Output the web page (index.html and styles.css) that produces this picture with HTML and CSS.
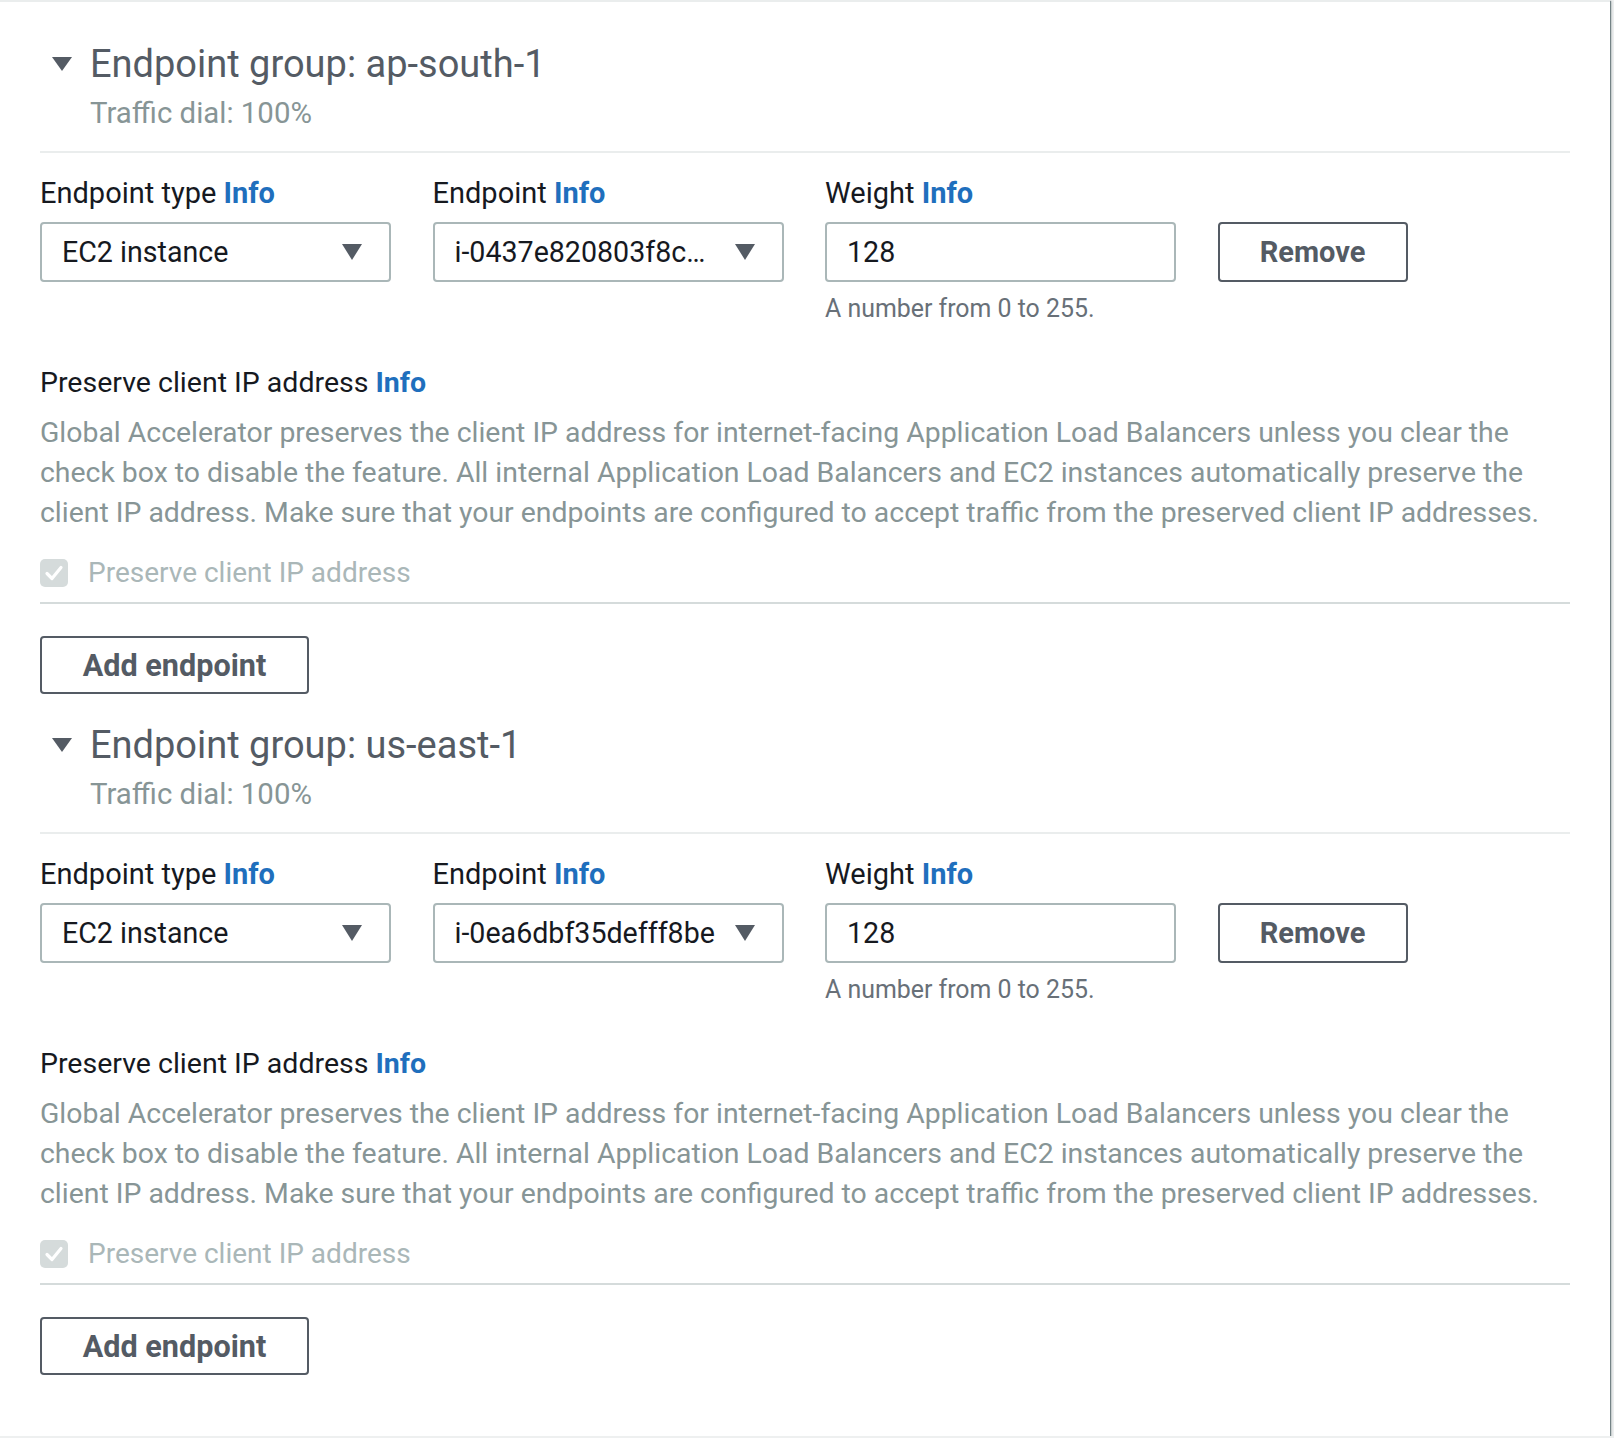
FILE: index.html
```html
<!DOCTYPE html>
<html lang="en">
<head>
<meta charset="utf-8">
<title>Endpoint groups</title>
<link rel="stylesheet" href="styles.css">
</head>
<body>
<div class="card">
  <section class="group">
    <div class="group-header">
      <svg class="caret" viewBox="0 0 20 14" width="20" height="14"><path d="M0 0H20L10 14Z"/></svg>
      <h2>Endpoint group: ap-south-1</h2>
    </div>
    <div class="traffic">Traffic dial: 100%</div>
    <div class="group-body">
      <div class="fields">
        <div class="field">
          <div class="label">Endpoint type <a class="info">Info</a></div>
          <div class="select"><span class="value">EC2 instance</span><svg class="sel-caret" viewBox="0 0 20 16" width="20" height="16"><path d="M0 0H20L10 16Z"/></svg></div>
        </div>
        <div class="field">
          <div class="label">Endpoint <a class="info">Info</a></div>
          <div class="select"><span class="value">i-0437e820803f8c…</span><svg class="sel-caret" viewBox="0 0 20 16" width="20" height="16"><path d="M0 0H20L10 16Z"/></svg></div>
        </div>
        <div class="field">
          <div class="label">Weight <a class="info">Info</a></div>
          <div class="input">128</div>
          <div class="hint">A number from 0 to 255.</div>
        </div>
        <button class="btn btn-remove">Remove</button>
      </div>
      <div class="preserve">
        <div class="label">Preserve client IP address <a class="info">Info</a></div>
        <p class="desc">Global Accelerator preserves the client IP address for internet-facing Application Load Balancers unless you clear the check box to disable the feature. All internal Application Load Balancers and EC2 instances automatically preserve the client IP address. Make sure that your endpoints are configured to accept traffic from the preserved client IP addresses.</p>
        <div class="check-row">
          <span class="checkbox"><svg viewBox="0 0 28 28" width="28" height="28"><path d="M7 14.5L12 19.5L21 8.5" fill="none" stroke="#fff" stroke-width="3.2" stroke-linecap="round" stroke-linejoin="round"/></svg></span>
          <span class="check-label">Preserve client IP address</span>
        </div>
      </div>
    </div>
    <div class="group-footer">
      <button class="btn btn-add">Add endpoint</button>
    </div>
  </section>

  <section class="group">
    <div class="group-header">
      <svg class="caret" viewBox="0 0 20 14" width="20" height="14"><path d="M0 0H20L10 14Z"/></svg>
      <h2>Endpoint group: us-east-1</h2>
    </div>
    <div class="traffic">Traffic dial: 100%</div>
    <div class="group-body">
      <div class="fields">
        <div class="field">
          <div class="label">Endpoint type <a class="info">Info</a></div>
          <div class="select"><span class="value">EC2 instance</span><svg class="sel-caret" viewBox="0 0 20 16" width="20" height="16"><path d="M0 0H20L10 16Z"/></svg></div>
        </div>
        <div class="field">
          <div class="label">Endpoint <a class="info">Info</a></div>
          <div class="select"><span class="value">i-0ea6dbf35defff8be</span><svg class="sel-caret" viewBox="0 0 20 16" width="20" height="16"><path d="M0 0H20L10 16Z"/></svg></div>
        </div>
        <div class="field">
          <div class="label">Weight <a class="info">Info</a></div>
          <div class="input">128</div>
          <div class="hint">A number from 0 to 255.</div>
        </div>
        <button class="btn btn-remove">Remove</button>
      </div>
      <div class="preserve">
        <div class="label">Preserve client IP address <a class="info">Info</a></div>
        <p class="desc">Global Accelerator preserves the client IP address for internet-facing Application Load Balancers unless you clear the check box to disable the feature. All internal Application Load Balancers and EC2 instances automatically preserve the client IP address. Make sure that your endpoints are configured to accept traffic from the preserved client IP addresses.</p>
        <div class="check-row">
          <span class="checkbox"><svg viewBox="0 0 28 28" width="28" height="28"><path d="M7 14.5L12 19.5L21 8.5" fill="none" stroke="#fff" stroke-width="3.2" stroke-linecap="round" stroke-linejoin="round"/></svg></span>
          <span class="check-label">Preserve client IP address</span>
        </div>
      </div>
    </div>
    <div class="group-footer">
      <button class="btn btn-add">Add endpoint</button>
    </div>
  </section>
</div>
</body>
</html>
```

FILE: styles.css
```css
html, body {
  margin: 0;
  padding: 0;
}

body {
  background: #eef0f0;
  font-family: Roboto, "Noto Sans", "Liberation Sans", sans-serif;
  font-size: 29px;
  line-height: 40px;
  color: #16191f;
}

.card {
  width: 1610px;
  box-sizing: border-box;
  background: #fff;
  border-top: 2px solid #eaeded;
  padding: 11px 40px 61px 40px;
  box-shadow: 1px 1px 1px 0 rgba(0, 28, 36, 0.45), 2px 1px 2px 0 rgba(0, 28, 36, 0.12);
}

.group {
  padding-top: 29px;
}

.group-header {
  display: flex;
  align-items: center;
  gap: 18px;
  padding-left: 12px;
  height: 44px;
}

.caret {
  fill: #545b64;
  flex: none;
}

.group-header h2 {
  margin: 0;
  font-size: 38px;
  line-height: 44px;
  font-weight: 400;
  color: #545b64;
}

.traffic {
  margin: 7px 0 0 50px;
  font-size: 29.4px;
  color: #879596;
}

.group-body {
  margin-top: 18px;
  border-top: 2px solid #eaeded;
  padding: 20px 0 9px;
}

.fields {
  display: flex;
  align-items: flex-start;
  gap: 41.5px;
}

.field {
  width: 351px;
  display: flex;
  flex-direction: column;
}

.label {
  height: 40px;
  margin-bottom: 9px;
  color: #16191f;
}

.preserve .label {
  margin-bottom: 0;
  font-size: 28.5px;
}

.info {
  color: #1f6fbd;
  font-weight: 700;
}

.select,
.input {
  box-sizing: border-box;
  height: 60px;
  border: 2px solid #aab7b8;
  border-radius: 4px;
  background: #fff;
  display: flex;
  align-items: center;
  padding: 0 27px 0 20px;
  color: #16191f;
  font-size: 28.6px;
}

.select {
  justify-content: space-between;
}

.select .value {
  white-space: nowrap;
  overflow: hidden;
}

.sel-caret {
  fill: #545b64;
  flex: none;
}

.hint {
  margin-top: 11px;
  font-size: 24.9px;
  line-height: 32px;
  color: #687078;
}

.btn {
  box-sizing: border-box;
  background: #fff;
  border: 2px solid #545b64;
  border-radius: 4px;
  color: #545b64;
  font-family: inherit;
  font-weight: 700;
  font-size: 29px;
  padding: 0;
  cursor: pointer;
}

.btn-remove {
  width: 190px;
  height: 60px;
  margin-top: 49px;
}

.preserve {
  margin-top: 38px;
}

.desc {
  margin: 10px 0 0;
  font-size: 28.4px;
  color: #879596;
}

.check-row {
  margin-top: 20px;
  height: 40px;
  display: flex;
  align-items: center;
  gap: 20px;
}

.checkbox {
  width: 28px;
  height: 28px;
  border-radius: 5px;
  background: #d5dbdb;
  display: flex;
}

.check-label {
  font-size: 28px;
  color: #aab7b8;
}

.group-footer {
  border-top: 2px solid #d5dbdb;
  padding-top: 32px;
}

.btn-add {
  width: 269px;
  height: 58px;
  font-size: 30.6px;
}
```
